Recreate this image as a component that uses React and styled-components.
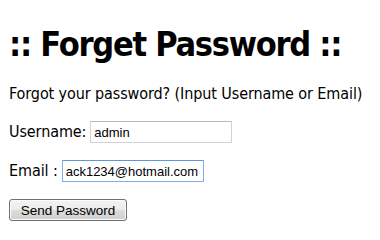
import React from 'react';
import styled, { createGlobalStyle } from 'styled-components';

const GlobalStyle = createGlobalStyle`
  html, body {
    margin: 0;
    padding: 0;
    background: #ffffff;
  }
  body {
    font-family: Tahoma, "DejaVu Sans Condensed", "DejaVu Sans", sans-serif;
    color: #000000;
  }
`;

const Page = styled.div`
  display: flex;
  flex-direction: column;
  align-items: flex-start;
  padding: 24px 8px 0 8px;
`;

const Title = styled.h1`
  margin: 0 0 0 1px;
  font-size: 34px;
  line-height: 40px;
  font-weight: bold;
  letter-spacing: -1.25px;
  white-space: nowrap;
`;

const Intro = styled.p`
  margin: 20px 0 0 1px;
  font-size: 16px;
  line-height: 20px;
  letter-spacing: -0.1px;
  white-space: nowrap;
`;

const Form = styled.form`
  display: flex;
  flex-direction: column;
  align-items: flex-start;
  gap: 17px;
  margin-top: 17px;
`;

const Row = styled.div`
  display: flex;
  align-items: center;
  gap: ${(p) => p.$gap}px;
  height: 22px;
`;

const Label = styled.label`
  font-size: 16px;
  line-height: 20px;
  letter-spacing: -0.1px;
  padding-left: 1px;
  white-space: pre;
`;

const TextInput = styled.input`
  box-sizing: border-box;
  width: 142px;
  height: 22px;
  margin: 0;
  padding: 0 3px;
  font-family: "Liberation Sans", Arial, sans-serif;
  font-size: 13px;
  color: #000000;
  background: #ffffff;
  border: 1px solid ${(p) => (p.$active ? '#7fb0e4' : '#d2d2d2')};
  border-top-color: ${(p) => (p.$active ? '#5f98d6' : '#b9b9b9')};
  border-radius: 1px;
  outline: none;
`;

const Button = styled.button`
  box-sizing: border-box;
  width: 118px;
  height: 22px;
  margin: 0 0 0 1px;
  padding: 0;
  font-family: "Liberation Sans", Arial, sans-serif;
  font-size: 13.5px;
  color: #000000;
  border: 1px solid #707070;
  border-radius: 3px;
  background: linear-gradient(to bottom, #f2f2f2 0%, #ebebeb 50%, #dddddd 51%, #cfcfcf 100%);
  box-shadow: inset 0 0 0 1px #fcfcfc;
  cursor: pointer;
`;

const App = () => {
  return (
    <>
      <GlobalStyle />
      <Page>
        <Title>:: Forget Password ::</Title>
        <Intro>Forgot your password? (Input Username or Email)</Intro>
        <Form onSubmit={(e) => e.preventDefault()}>
          <Row $gap={4}>
            <Label htmlFor="username">Username:</Label>
            <TextInput id="username" type="text" defaultValue="admin" />
          </Row>
          <Row $gap={4}>
            <Label htmlFor="email">{'Email :'}</Label>
            <TextInput id="email" type="text" defaultValue="ack1234@hotmail.com" $active />
          </Row>
          <Button type="submit">Send Password</Button>
        </Form>
      </Page>
    </>
  );
};

export default App;
